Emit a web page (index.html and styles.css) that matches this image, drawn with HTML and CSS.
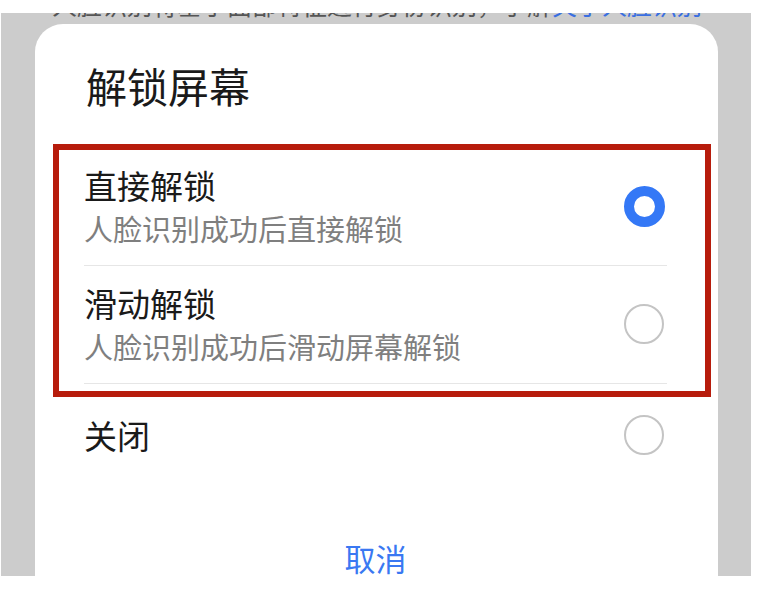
FILE: index.html
```html
<!DOCTYPE html>
<html lang="zh-CN">
<head>
<meta charset="utf-8">
<title>解锁屏幕</title>
<link rel="stylesheet" href="styles.css">
</head>
<body>
<div class="panel">
  <div class="intro"><p class="intro-text">人脸识别将基于面部特征进行身份识别，了解<span class="link">关于人脸识别</span></p></div>
  <div class="sheet">
    <h1 class="sheet-title">解锁屏幕</h1>
    <div class="options">
      <div class="group">
        <div class="option">
          <div class="option-text">
            <div class="option-title">直接解锁</div>
            <div class="option-sub">人脸识别成功后直接解锁</div>
          </div>
          <span class="radio radio-on"></span>
        </div>
        <div class="option">
          <div class="option-text">
            <div class="option-title">滑动解锁</div>
            <div class="option-sub">人脸识别成功后滑动屏幕解锁</div>
          </div>
          <span class="radio"></span>
        </div>
        <div class="highlight"></div>
      </div>
      <div class="option option-last">
        <div class="option-text">
          <div class="option-title">关闭</div>
        </div>
        <span class="radio"></span>
      </div>
    </div>
    <div class="cancel">取消</div>
  </div>
</div>
</body>
</html>
```

FILE: styles.css
```css
html, body {
  margin: 0;
  padding: 0;
  background: #ffffff;
}
body {
  font-family: "Noto Sans CJK SC", "Noto Sans", sans-serif;
  color: #1a1a1a;
  display: flex;
  flex-direction: column;
  padding: 13px 0 0 1px;
}
.panel {
  width: 750px;
  height: 563px;
  background: #cccccc;
  overflow: hidden;
  display: flex;
  flex-direction: column;
  flex: none;
}
.intro {
  height: 11px;
  flex: none;
  overflow: hidden;
  display: flex;
  align-items: flex-end;
  padding-left: 51px;
}
.intro-text {
  margin: 0 0 6px 0;
  flex: none;
  font-size: 25px;
  line-height: 28px;
  height: 28px;
  color: #555555;
  white-space: nowrap;
}
.link {
  color: #3a6fe0;
}
.sheet {
  flex: none;
  margin-left: 34px;
  width: 683px;
  height: 552px;
  background: #ffffff;
  border-radius: 28px 28px 0 0;
  box-sizing: border-box;
  padding: 33px 51px 0 49px;
}
.sheet-title {
  margin: 0 0 35px 2px;
  font-size: 41px;
  font-weight: normal;
  line-height: 56px;
  color: #1a1a1a;
}
.group {
  position: relative;
}
.highlight {
  position: absolute;
  left: -31px;
  right: -44px;
  top: -4px;
  bottom: -13px;
  border: 6px solid #b71c0c;
  pointer-events: none;
}
.option {
  display: flex;
  align-items: center;
  justify-content: space-between;
  padding: 15px 0 16px 0;
  border-bottom: 1px solid #e6e6e6;
}
.option-last {
  border-bottom: none;
  padding: 29px 0 29px 0;
}
.option-text {
  display: flex;
  flex-direction: column;
}
.option-title {
  font-size: 33px;
  line-height: 44px;
  color: #1a1a1a;
}
.option-sub {
  font-size: 29px;
  line-height: 42px;
  color: #7f7f7f;
}
.radio {
  width: 40px;
  height: 40px;
  box-sizing: border-box;
  border: 2px solid #c4c4c4;
  border-radius: 50%;
  margin-right: 3px;
  flex: none;
}
.radio-on {
  width: 41px;
  height: 41px;
  border: 10px solid #3478f6;
  margin-right: 2px;
}
.cancel {
  margin-top: 56px;
  text-align: center;
  font-size: 31px;
  line-height: 32px;
  color: #3a78f2;
}
```
